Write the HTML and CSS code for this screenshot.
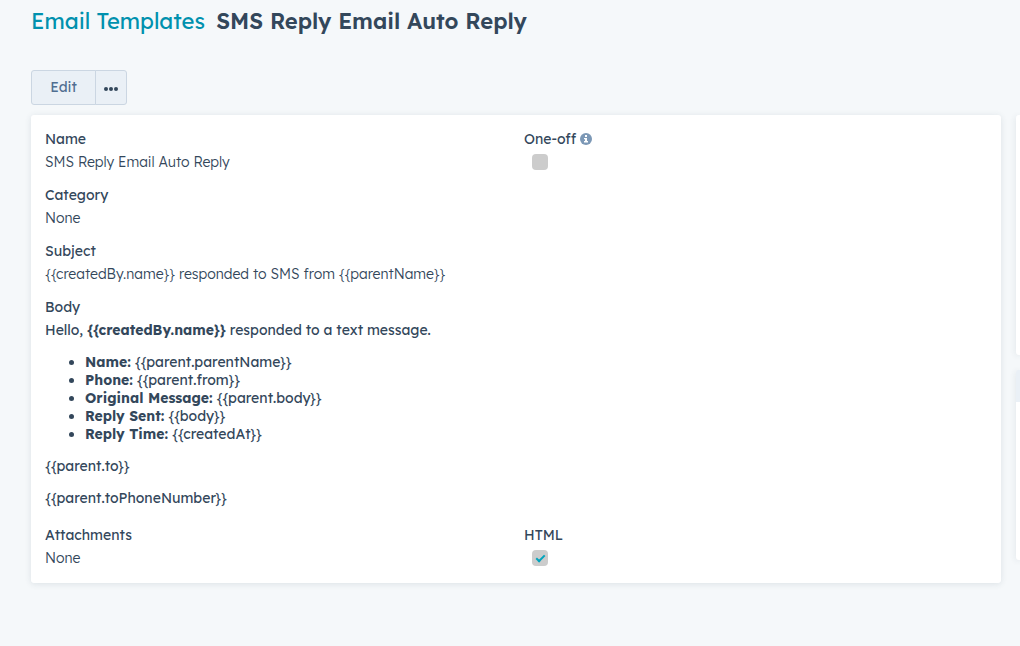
FILE: index.html
```html
<!DOCTYPE html>
<html lang="en">
<head>
<meta charset="UTF-8" />
<meta name="viewport" content="width=device-width, initial-scale=1" />
<title>SMS Reply Email Auto Reply</title>
<link rel="stylesheet" href="styles.css">
</head>
<body>

<header class="page-header">
  <h1><a href="#EmailTemplate">Email Templates</a> <span class="record-name">SMS Reply Email Auto Reply</span></h1>
</header>

<div class="record">
  <main class="middle">
    <div class="btn-group">
      <button type="button" class="btn edit">Edit</button>
      <button type="button" class="btn more" aria-label="More actions">
        <svg viewBox="0 0 14 4" width="14" height="4">
          <circle cx="2" cy="2" r="2"/>
          <circle cx="7" cy="2" r="2"/>
          <circle cx="12" cy="2" r="2"/>
        </svg>
      </button>
    </div>

    <section class="panel">
      <div class="cell">
        <div class="label">Name</div>
        <div class="value">SMS Reply Email Auto Reply</div>
      </div>
      <div class="cell">
        <div class="label">
          <label for="oneOff">One-off</label>
          <svg class="info" viewBox="0 0 12 12" width="12" height="12">
            <circle cx="6" cy="6" r="6" fill="#7c98b6"/>
            <path d="M5 2h2v2H5zM4 5h3v3h1v1.500H4V8h1V6.200H4z" fill="#fff"/>
          </svg>
        </div>
        <div class="value check"><input type="checkbox" id="oneOff" disabled></div>
      </div>

      <div class="cell wide">
        <div class="label">Category</div>
        <div class="value">None</div>
      </div>

      <div class="cell wide">
        <div class="label">Subject</div>
        <div class="value">{{createdBy.name}} responded to SMS from {{parentName}}</div>
      </div>

      <div class="cell wide">
        <div class="label">Body</div>
        <div class="body-text">
          <p>Hello, <b>{{createdBy.name}}</b> responded to a text message.</p>
          <ul>
            <li><b>Name:</b> {{parent.parentName}}</li>
            <li><b>Phone:</b> {{parent.from}}</li>
            <li><b>Original Message:</b> {{parent.body}}</li>
            <li><b>Reply Sent:</b> {{body}}</li>
            <li><b>Reply Time:</b> {{createdAt}}</li>
          </ul>
          <p>{{parent.to}}</p>
          <p>{{parent.toPhoneNumber}}</p>
        </div>
      </div>

      <div class="cell">
        <div class="label">Attachments</div>
        <div class="value">None</div>
      </div>
      <div class="cell">
        <div class="label"><label for="isHtml">HTML</label></div>
        <div class="value check"><input type="checkbox" id="isHtml" checked disabled></div>
      </div>
    </section>
  </main>

  <aside class="side">
    <div class="side-panel first"></div>
    <div class="side-panel second"></div>
  </aside>
</div>

</body>
</html>
```

FILE: styles.css
```css
body {
  margin: 0;
  min-height: 100vh;
  background-color: #f5f8fa;
  font-family: "Lexend Deca", Inter, "Open Sans", sans-serif;
  font-size: 14px;
  line-height: 18px;
  color: #33475b;
}
.page-header {
  padding: 6px 31px 34px;
}
h1 {
  margin: 0;
  font-size: 22px;
  font-weight: 400;
  line-height: 30px;
}
h1 a {
  color: #0091ae;
  text-decoration: none;
}
.record-name {
  margin-left: 5px;
  font-weight: 600;
}
.record {
  display: grid;
  grid-template-columns: minmax(0, 1fr) 4px;
  gap: 15px;
  padding: 0 0 40px 31px;
}
.btn-group {
  display: flex;
  margin-bottom: 10px;
}
.btn {
  height: 35px;
  padding: 0 0 2px;
  border: 1px solid #cbd6e2;
  background-color: #eaf0f6;
  color: #506e91;
  font: inherit;
  cursor: pointer;
}
.edit {
  width: 65px;
  border-radius: 3px 0 0 3px;
}
.more {
  display: flex;
  align-items: center;
  justify-content: center;
  width: 32px;
  margin-left: -1px;
  padding: 2px 0 0;
  border-radius: 0 3px 3px 0;
}
.more svg {
  fill: #33475b;
}
.panel {
  display: grid;
  grid-template-columns: 1fr 1fr;
  gap: 12px 16px;
  padding: 14px;
  border-radius: 3px;
  background-color: white;
  box-shadow: 0 1px 6px rgba(45, 62, 80, 0.12);
}
.wide {
  grid-column: 1 / -1;
}
.label {
  display: flex;
  align-items: center;
  gap: 4px;
  margin-bottom: 2px;
  line-height: 20px;
}
.value {
  font-weight: 300;
  line-height: 22px;
}
.check {
  display: flex;
  align-items: center;
  height: 22px;
  padding-left: 8px;
}
input[type="checkbox"] {
  appearance: none;
  display: flex;
  justify-content: center;
  width: 16px;
  height: 16px;
  margin: 0;
  border-radius: 4px;
  background-color: #cccccc;
}
input[type="checkbox"]:checked::after {
  content: "";
  width: 3px;
  height: 7px;
  margin-top: 3px;
  border: solid #00a4bd;
  border-width: 0 2px 2px 0;
  transform: rotate(45deg);
}
.body-text {
  padding: 2px 0 6px;
}
.body-text p,
.body-text ul {
  margin: 0 0 14px;
}
.body-text ul {
  padding-left: 40px;
}
.body-text p:last-child {
  margin-bottom: 0;
}
.body-text b {
  font-weight: 700;
}
.side {
  padding-top: 45px;
}
.side-panel {
  border-radius: 3px 0 0 3px;
  background-color: white;
  box-shadow: 0 1px 6px rgba(45, 62, 80, 0.12);
}
.first {
  height: 240px;
  margin-bottom: 15px;
}
.second {
  height: 158px;
  border-top: 32px solid #eaf0f6;
}
```
